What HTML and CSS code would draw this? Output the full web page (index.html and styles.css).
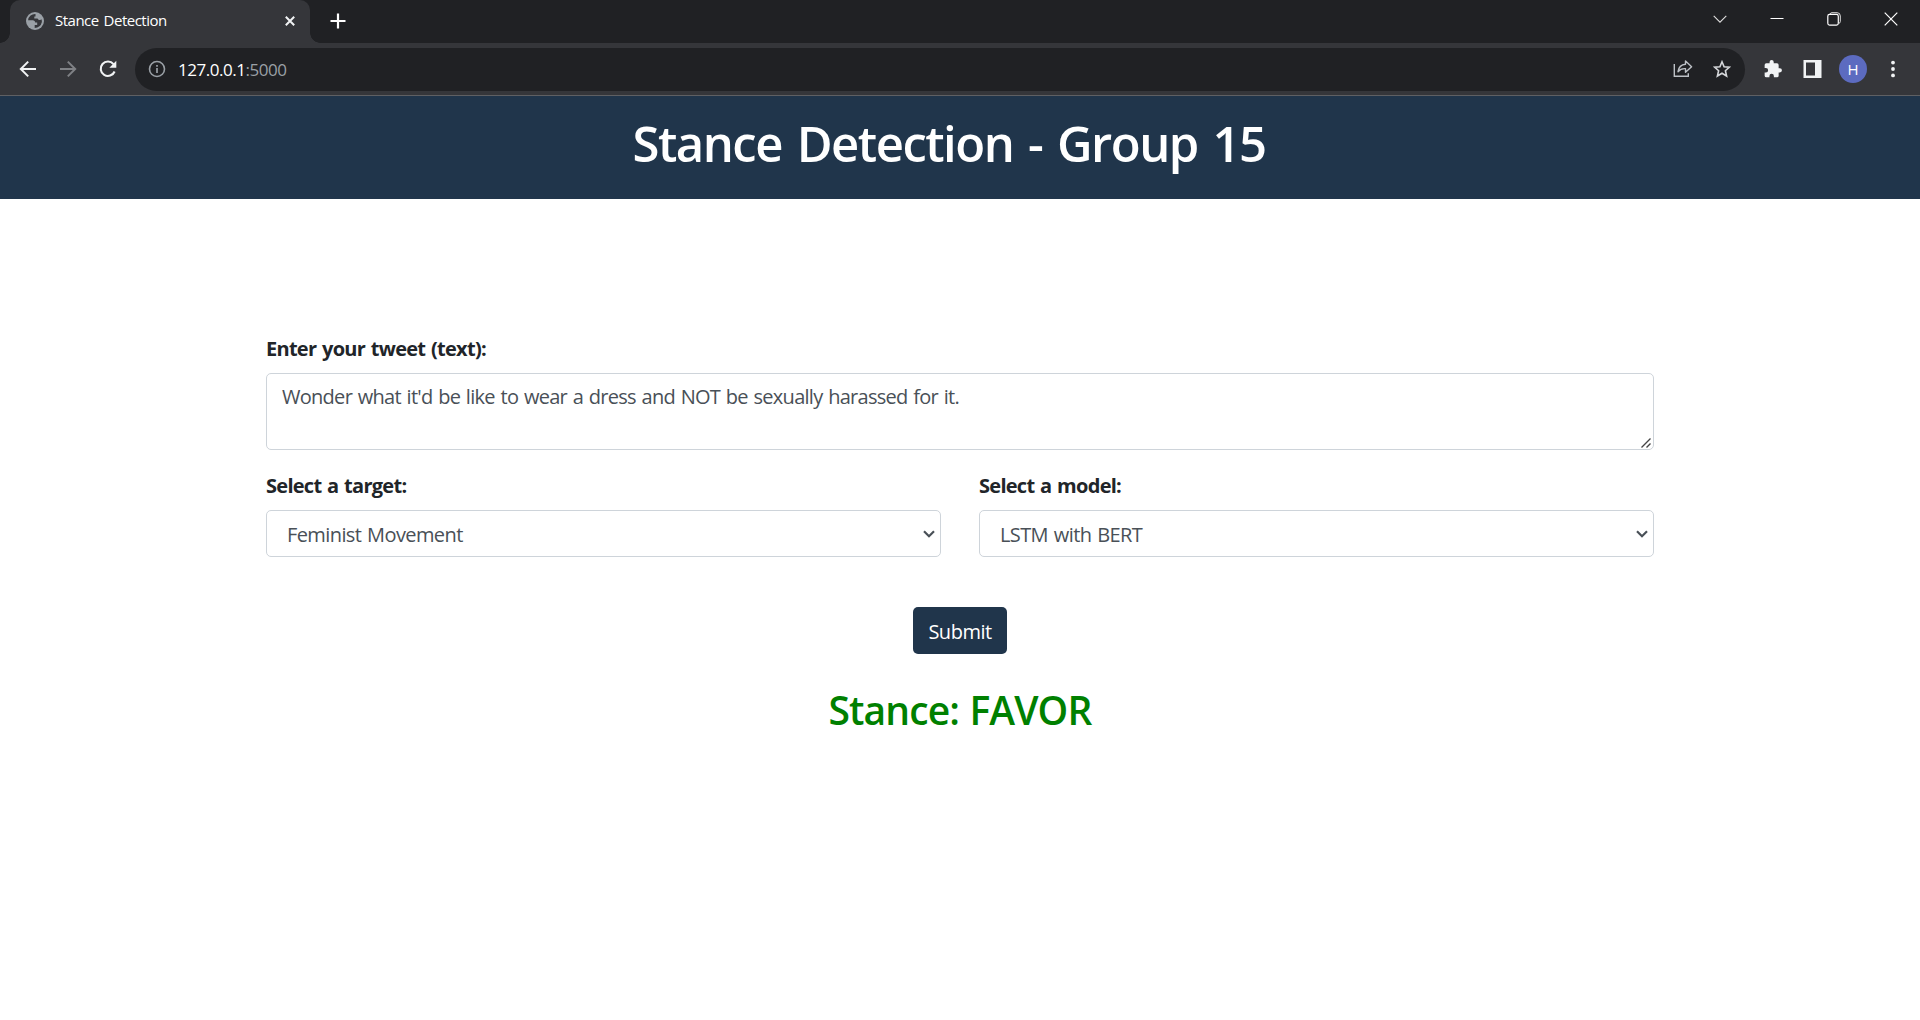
FILE: index.html
```
<!DOCTYPE html>
<html lang="en">
<head>
<meta charset="utf-8">
<title>Stance Detection</title>
<link rel="stylesheet" href="styles.css">
</head>
<body>
<div class="browser">
  <div class="tab-strip">
    <div class="tab">
      <svg class="globe" width="18" height="18" viewBox="0 0 18 18"><circle cx="9" cy="9" r="9" fill="#9aa0a6"/><path d="M9.500 2 A7 7 0 0 0 2.100 8.200 H7 Q9.200 8.400 9.200 10.500 H11.200 V13 H8.700 V15.900 Q14.500 15.800 15.900 10 Q15.900 8.600 15.500 7.300 Q14.500 8.600 12.500 7.800 L11.500 6.500 H8.300 V4.500 H9.500 Z" fill="#35363a"/></svg>
      <span class="tab-title">Stance Detection</span>
      <svg class="tab-close" width="10" height="10" viewBox="0 0 10 10"><path d="M.8 .8 9.2 9.2M9.2 .8 .8 9.2" stroke="#f1f3f4" stroke-width="2"/></svg>
    </div>
    <svg class="new-tab" width="16" height="16" viewBox="0 0 16 16"><path d="M8 .5V15.5M.5 8H15.5" stroke="#fff" stroke-width="2.2"/></svg>
    <div class="window-controls">
      <svg width="14" height="14" viewBox="0 0 14 14"><path d="M.7 3.8 7 10.2 13.3 3.8" fill="none" stroke="#ddd" stroke-width="1.1"/></svg>
      <svg width="14" height="14" viewBox="0 0 14 14"><path d="M.5 6.500H13.5" stroke="#fff" stroke-width="1"/></svg>
      <svg width="14" height="14" viewBox="0 0 14 14"><path d="M3 2.2V2Q3.3.7 5 .7H10Q13.3.7 13.3 4V9.5Q13.3 11 12 11.3" fill="none" stroke="#ddd"/><rect x=".8" y="2.4" width="10.5" height="10.7" rx="1.8" fill="none" stroke="#fff" stroke-width="1.2"/></svg>
      <svg width="14" height="14" viewBox="0 0 14 14"><path d="M.7 .7 13.3 13.3M13.3 .7 .7 13.3" stroke="#fff" stroke-width="1.2"/></svg>
    </div>
  </div>
  <div class="toolbar">
    <div class="nav">
      <svg width="18" height="18" viewBox="0 0 18 18"><path d="M17 9H2M9.2 1.6 1.8 9l7.4 7.4" fill="none" stroke="#f1f3f4" stroke-width="2"/></svg>
      <svg width="18" height="18" viewBox="0 0 18 18"><path d="M1 9H16M8.8 1.6 16.2 9l-7.4 7.4" fill="none" stroke="#7f8185" stroke-width="2"/></svg>
      <svg width="18" height="18" viewBox="0 0 18 18"><path d="M15.6 11.5A7.2 7.2 0 1 1 14.5 4.2" fill="none" stroke="#f1f3f4" stroke-width="2.1"/><path d="M17.3.8V7.8H10.3Z" fill="#f1f3f4"/></svg>
    </div>
    <div class="omnibox">
      <svg class="info" width="18" height="18" viewBox="0 0 18 18"><circle cx="9" cy="9" r="7.5" fill="none" stroke="#9aa0a6" stroke-width="1.6"/><path d="M9 8V13M9 5V6.7" stroke="#9aa0a6" stroke-width="1.7"/></svg>
      <div class="url"><span class="host">127.0.0.1</span><span class="port">:5000</span></div>
      <svg class="share" width="20" height="20" viewBox="0 0 20 20"><path d="M1.3 5V17.2H15.3V14.3" fill="none" stroke="#bdc1c6" stroke-width="1.4"/><path d="M5 12.7Q6 5.8 12.5 5.3V2L18.6 7.8 12.5 13.3V9.7Q7.8 9.3 5 12.7Z" fill="none" stroke="#bdc1c6" stroke-width="1.4" stroke-linejoin="round"/></svg>
      <svg class="star" width="18" height="18" viewBox="0 0 18 18"><path d="M9 1.8 11.1 6.7 16.4 7.2 12.4 10.7 13.6 16 9 13.2 4.4 16 5.6 10.7 1.6 7.2 6.9 6.7Z" fill="none" stroke="#d5d7da" stroke-width="1.6"/></svg>
    </div>
    <svg class="puzzle" width="19" height="19" viewBox="0 0 24 24"><path d="M20.5 11H19V7a2 2 0 0 0-2-2h-4V3.500a2.500 2.500 0 0 0-5 0V5H4a2 2 0 0 0-2 2v3.800h1.500a2.700 2.700 0 0 1 0 5.400H2V20a2 2 0 0 0 2 2h3.800v-1.500a2.700 2.700 0 0 1 5.400 0V22H17a2 2 0 0 0 2-2v-4h1.500a2.500 2.500 0 0 0 0-5Z" fill="#f1f3f4" transform="translate(0 -1) scale(1.040)"/></svg>
    <svg class="panel" width="19" height="18" viewBox="0 0 19 18"><path d="M.5 0H18.500V18H.5ZM3 2.500V15.500H12V2.500Z" fill="#f1f3f4" fill-rule="evenodd"/></svg>
    <div class="avatar">H</div>
    <svg class="menu" width="6" height="18" viewBox="0 0 6 18"><g fill="#f1f3f4"><circle cx="3" cy="2.600" r="1.900"/><circle cx="3" cy="9" r="1.900"/><circle cx="3" cy="15.400" r="1.900"/></g></svg>
  </div>
</div>
<header class="banner"><h1>Stance Detection - Group 15</h1></header>
<form class="stance-form">
  <label>Enter your tweet (text):</label>
  <div class="tweet-box">
    <div class="field tweet">Wonder what it'd be like to wear a dress and NOT be sexually harassed for it.</div>
    <svg class="grip" width="10" height="10" viewBox="0 0 10 10"><path d="M.5 9.500 9.500 .5M5.500 9.500 9.500 5.500" stroke="#444" stroke-width="1.400"/></svg>
  </div>
  <div class="choices">
    <div class="choice">
      <label>Select a target:</label>
      <div class="field select"><span>Feminist Movement</span><svg width="12" height="8" viewBox="0 0 12 8"><path d="M1 1.300 6 6.200 11 1.300" fill="none" stroke="#495057" stroke-width="2.200"/></svg></div>
    </div>
    <div class="choice">
      <label>Select a model:</label>
      <div class="field select"><span>LSTM with BERT</span><svg width="12" height="8" viewBox="0 0 12 8"><path d="M1 1.300 6 6.200 11 1.300" fill="none" stroke="#495057" stroke-width="2.200"/></svg></div>
    </div>
  </div>
  <button class="submit" type="button">Submit</button>
  <h2 class="result">Stance: FAVOR</h2>
</form>
</body>
</html>
```
FILE: styles.css
```
* { box-sizing: border-box; }
body { margin: 0; background: #fff; color: #212529; font: 20px/30px "Open Sans", "Noto Sans", sans-serif; }
svg { display: block; flex: none; }
h1, h2 { margin: 0; font-weight: 600; }

.browser { height: 96px; background: #35363a; border-bottom: 1px solid #5f6063; color: #fff; }
.tab-strip { display: flex; align-items: flex-start; height: 43px; padding-left: 10px; background: #202124; }
.tab { position: relative; display: flex; align-items: center; width: 300px; height: 43px; padding: 0 15px 1px 16px; border-radius: 10px 10px 0 0; background: #35363a; }
.tab::before, .tab::after { content: ""; position: absolute; bottom: 0; width: 10px; height: 10px; }
.tab::before { left: -10px; background: radial-gradient(circle at 0 0, #202124 9.5px, #35363a 10px); }
.tab::after { right: -10px; background: radial-gradient(circle at 100% 0, #202124 9.5px, #35363a 10px); }
.tab-title { margin: 0 auto 0 11px; padding-bottom: 2px; font-size: 15px; line-height: 20px; letter-spacing: -.5px; word-spacing: 1.5px; }
.new-tab { margin: 13px 0 0 20px; }
.window-controls { display: flex; gap: 43px; margin: 12px 22px 0 auto; }

.toolbar { display: flex; align-items: center; height: 52px; }
.nav { display: flex; gap: 22px; margin: 0 18px 0 19px; }
.omnibox { display: flex; align-items: center; flex: 1; height: 43px; padding: 0 14px 0 13px; border-radius: 22px; background: #202124; }
.url { margin: 0 auto 0 12px; padding-top: 2px; font-size: 17px; line-height: 24px; letter-spacing: -.47px; white-space: nowrap; }
.port { color: #9aa0a6; }
.share { margin-right: 20px; }
.puzzle { margin-left: 18px; }
.panel { margin-left: 21px; }
.avatar { width: 28px; height: 28px; margin: 0 23px 0 17px; border-radius: 50%; background: #5c6bc0; font-size: 15px; line-height: 28px; text-align: center; }
.menu { margin-right: 24px; }

.banner { display: flex; justify-content: center; height: 103px; padding: 17px 22px 0 0; background: #20354b; color: #fff; }
.banner h1 { font-size: 49px; line-height: 60px; letter-spacing: -1.5px; word-spacing: 3.5px; white-space: nowrap; }

.stance-form { display: flex; flex-direction: column; width: 1388px; margin: 134px auto 0; letter-spacing: -.72px; word-spacing: 1.2px; }
label { display: block; height: 40px; padding-top: 1px; font-weight: 700; }
.field { border: 1px solid #ced4da; border-radius: 5px; color: #495057; }
.tweet-box { position: relative; margin-bottom: 20px; }
.tweet { height: 77px; padding: 8px 15px; }
.grip { position: absolute; right: 3px; bottom: 2px; }
.choices { display: grid; grid-template-columns: 1fr 1fr; gap: 38px; }
.select { display: flex; align-items: center; justify-content: space-between; height: 47px; padding: 2px 5px 0 20px; letter-spacing: -.6px; }
.select svg { margin-bottom: 1px; }
.submit { align-self: center; width: 94px; height: 47px; margin: 50px 0 26px; padding: 3px 0 0; border: 0; border-radius: 5px; background: #20354b; color: #fff; font: inherit; letter-spacing: -.5px; }
.result { color: green; font-size: 39px; line-height: 60px; letter-spacing: -.9px; text-align: center; }
```
